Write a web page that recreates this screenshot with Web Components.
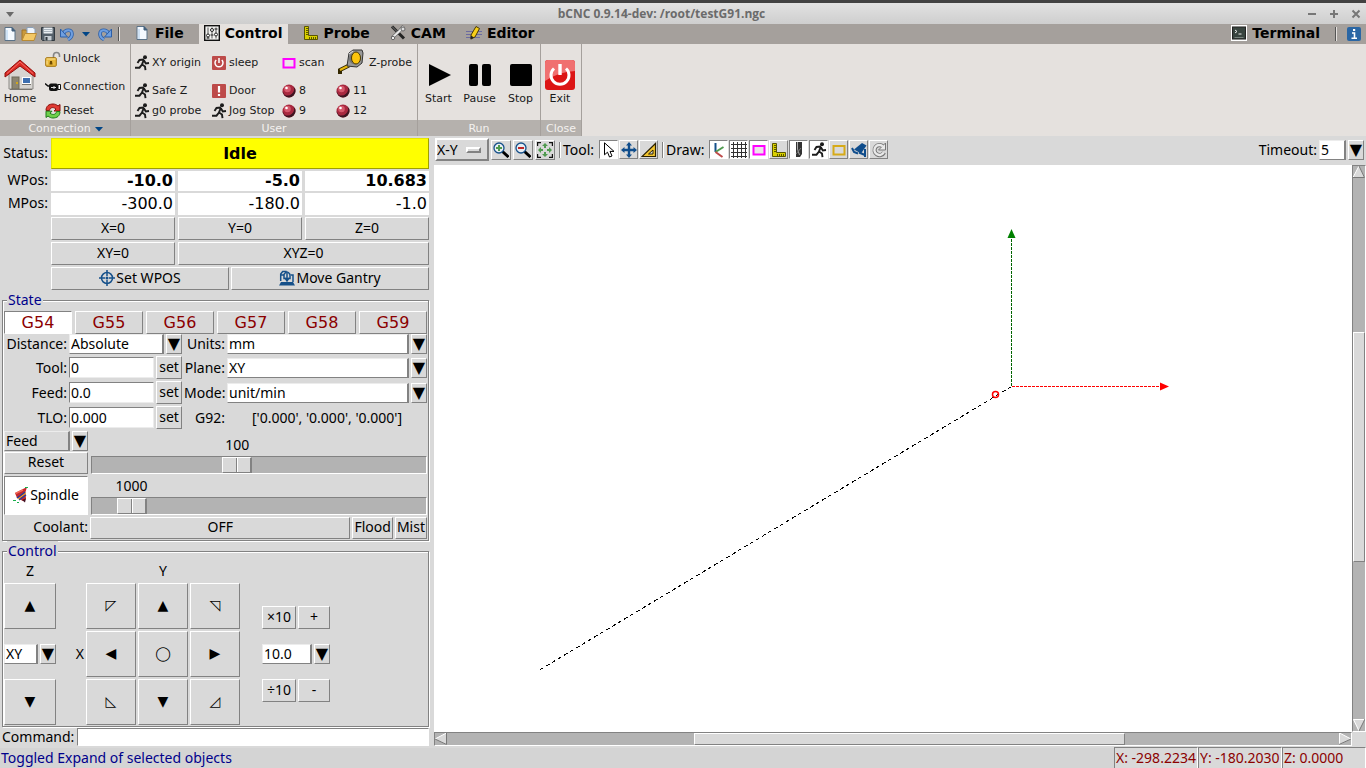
<!DOCTYPE html>
<html lang="en">
<head>
<meta charset="utf-8">
<title>bCNC 0.9.14-dev: /root/testG91.ngc</title>
<style>
html, body { height: 100%; }
body { margin: 0; font: 14px/20px "Noto Sans", "DejaVu Sans", sans-serif; color: #000; background: #d9d9d9; }
</style>
</head>
<body>
<cnc-app></cnc-app>
<script>
const ICONS = {
  doc: '<path d="M3 1.5h7l3 3v10H3z" fill="#f4f9ff" stroke="#5a7288"/><path d="M10 1.5l3 3.500h-3z" fill="#44617c" stroke="#44617c"/><path d="M5 14V4" stroke="#cfe2f5" stroke-width="2"/>',
  open: '<path d="M1 14V4h4l1 1.500h6V7" fill="#c99a3c" stroke="#a07428"/><path d="M6 1.500h6l2 2V10H6z" fill="#eef4fb" stroke="#8aa0b8"/><path d="M1 14.500L4 7.500h11.500L13 14.500z" fill="#f3c865" stroke="#b98a34"/>',
  save: '<path d="M1.500 1.500h13v13h-12l-1-1z" fill="#55606a" stroke="#30383f"/><rect x="3.500" y="1.500" width="9" height="6" fill="#e9eef2"/><path d="M4 3.500h8M4 5.500h8" stroke="#a9b4bd"/><rect x="4.500" y="10" width="7" height="4.500" fill="#c6cdd3"/><rect x="5.500" y="11" width="2" height="3.500" fill="#30383f"/>',
  undo: '<path d="M4.500 7.500C6 3.500 13 2.500 13 8c0 3-2 4.500-4 5.500" fill="none" stroke="#2c5fa8" stroke-width="3.600"/><path d="M4.500 7.500C6 3.500 13 2.500 13 8c0 3-2 4.500-4 5.500" fill="none" stroke="#6f9fe0" stroke-width="2"/><path d="M1.500 3v8h7z" fill="#6f9fe0" stroke="#2c5fa8"/>',
  redo: '<path d="M11.500 7.500C10 3.500 3 2.500 3 8c0 3 2 4.500 4 5.500" fill="none" stroke="#2c5fa8" stroke-width="3.600"/><path d="M11.500 7.500C10 3.500 3 2.500 3 8c0 3 2 4.500 4 5.500" fill="none" stroke="#6f9fe0" stroke-width="2"/><path d="M14.500 3v8h-7z" fill="#6f9fe0" stroke="#2c5fa8"/>',
  down: '<path d="M4 6h8l-4 4.500z" fill="#004586"/>',
  sliders: '<rect x=".7" y=".7" width="14.600" height="14.600" fill="#f2f2f0" stroke="#111" stroke-width="1.400"/><path d="M4 2.500v11M8 2.500v11M12 2.500v11" stroke="#555"/><circle cx="4" cy="10.500" r="1.500" fill="#fff" stroke="#222"/><circle cx="8" cy="5" r="1.500" fill="#fff" stroke="#222"/><circle cx="12" cy="9.500" r="1.500" fill="#fff" stroke="#222"/><path d="M2.500 13h3M6.500 10h3M10.500 4h3" stroke="#222"/>',
  square: '<path d="M1.500 1.500h4v9h9v4h-13z" fill="#d9d000" stroke="#5a5600"/><path d="M3 3.500h2M3 5.500h2M3 7.500h2M3 9.500h2M6.500 12v2M8.500 12v2M10.500 12v2M12.500 12v2" stroke="#5a5600"/>',
  tools: '<path d="M2 1.500l12 12" stroke="#222" stroke-width="3"/><path d="M2 1.500l7 7" stroke="#555" stroke-width="1.500"/><path d="M13.500 1l-4 5-7.500 7" fill="none" stroke="#666" stroke-width="3.200"/><path d="M13.500 1.500l-4 4.500-7 6.500" fill="none" stroke="#e8e8e8" stroke-width="2"/><circle cx="13" cy="4" r="2" fill="#ddd" stroke="#666"/><circle cx="3" cy="13" r="1.700" fill="#eee" stroke="#666"/>',
  edit: '<path d="M0 6.500h16M0 9.500h16M0 12.500h14" stroke="#6b6ba0"/><path d="M5 10l5-8.500 3.500 2L9 12l-4 2z" fill="#f8cf18" stroke="#4a3a00"/><path d="M5 10.500l-.5 4 3.500-2z" fill="#222"/>',
  terminal: '<rect x=".5" y=".5" width="15" height="15" fill="#eee" stroke="#fff"/><rect x="1.500" y="2" width="13" height="12" fill="#38443f" stroke="#222"/><path d="M4 5l2 1.500L4 8M7.500 9h3" fill="none" stroke="#eee"/><path d="M3.500 12.500h9" stroke="#77827d"/>',
  info: '<rect x="1" y="1" width="14" height="14" rx="2" fill="#2a66a4"/><path d="M6 7h2.500v5M5.500 12.200h5.500" fill="none" stroke="#fff" stroke-width="1.600"/><path d="M7 3h2.200v2H7z" fill="#fff"/>',
  home: '<path d="M5 14v16h24V14L17 4z" fill="#d7d5d1" stroke="#8b8985"/><rect x="8" y="18" width="7" height="12" fill="#8c8672" stroke="#6e6a5a"/><circle cx="13" cy="24" r="1" fill="#e9b200"/><rect x="18.500" y="18.500" width="8" height="6" fill="#3d6fb0" stroke="#fff"/><path d="M18 25.500h9M6 30.500h22" stroke="#77746f"/><path d="M1 18v-4L16 1l15 13v4L16 7z" fill="#dd2a24" stroke="#8f0f0c"/><path d="M3 14.500L16 3l13 11.500" fill="none" stroke="#f3726b"/>',
  lock: '<path d="M8.500 8V4.500c0-4 6-4 6 0V6" fill="none" stroke="#868686" stroke-width="1.600"/><rect x=".7" y="6.700" width="10.600" height="8.600" rx="1" fill="#e9b83b" stroke="#a2720d"/><path d="M1.500 8h9M2 9.500v4" stroke="#fbe39a"/><path d="M5 10h2l.5 3.500h-3z" fill="#6e4a00"/>',
  plug: '<path d="M0 4.500l3 2.500h2" fill="none" stroke="#111" stroke-width="1.500"/><rect x="4" y="4.500" width="9" height="7.500" rx="2" fill="#111"/><path d="M13 5.500h2.500v5H13z" fill="#fff" stroke="#111"/><path d="M6 8.500h5M9 7v3" stroke="#ddd"/>',
  reset: '<path d="M1 7.500C1 3 4 1 8 1c2 0 3.500.7 5 2l2-1.500V8H9l2-2C8 3.500 5 4.500 4.500 7.500z" fill="#e03a32" stroke="#8a0f0c"/><path d="M15 8.500C15 13 12 15 8 15c-2 0-3.500-.7-5-2l-2 1.500V8.200h6l-2 2C8 12.500 11 11.500 11.500 8.500z" fill="#6fd04a" stroke="#1f7a1a"/>',
  run: '<circle cx="11" cy="2.200" r="2" fill="#1c1c1c"/><path d="M10 4.500L5.500 5 3.500 8M10 4.500L8 9.500l3 2 .5 3.700M8 9.500l-2.500 3.200H1M10 5.500l1.800 3L15 8" fill="none" stroke="#1c1c1c" stroke-width="1.900"/>',
  sleep: '<rect x="1" y="1" width="14" height="14" rx="1" fill="#bd4a49"/><path d="M5.200 5a4 4 0 1 0 5.600 0M8 3v5" fill="none" stroke="#fff" stroke-width="1.500"/>',
  door: '<rect x="1" y="1" width="14" height="14" rx="1" fill="#bd4a49"/><path d="M8 3v6.500M8 11v2" stroke="#fff" stroke-width="2.200"/>',
  scan: '<rect x="2.500" y="4" width="11" height="8.500" fill="#ebe4e8" stroke="#f0f" stroke-width="2"/>',
  ball: '<circle cx="8" cy="8" r="6.500" fill="#a8283f"/><path d="M1.500 8a6.500 6.500 0 0 0 13 0 6.500 6.500 0 0 0-2-4.600 6.500 6.500 0 0 1-9 8.300z" fill="#3d1520"/><circle cx="6.500" cy="6" r="3.300" fill="#d5586b"/><circle cx="5.500" cy="5" r="1.300" fill="#fff"/>',
  tape: '<path d="M14 18.500L4 23.500M5 22v5" fill="none" stroke="#332700" stroke-width="4"/><path d="M14 18.500L5 23" stroke="#e8b80c" stroke-width="2"/><path d="M14 6l4-3h9l1 3-1 10-5 4-10-1z" fill="#999" stroke="#333"/><circle cx="20" cy="11.500" r="6" fill="#777"/><ellipse cx="21" cy="11" rx="4.500" ry="6" fill="#fcc50d" stroke="#4a3900"/><path d="M14 7l4-3" stroke="#ddd"/>',
  start: '<path d="M6 5l22 11L6 27z" fill="#000"/>',
  pause: '<rect x="5" y="5" width="9" height="22" rx="2"/><rect x="18" y="5" width="9" height="22" rx="2"/>',
  stop: '<rect x="5" y="5" width="22" height="22" rx="2"/>',
  exit: '<rect x="1" y="1" width="30" height="30" rx="3" fill="#dc1515"/><path d="M1 4q0-3 3-3h24q3 0 3 3v8Q14 13 1 22z" fill="#f07070"/><path d="M10 9.500a9 9 0 1 0 12 0" fill="none" stroke="#fff" stroke-width="3"/><path d="M16 5v11" stroke="#fff" stroke-width="3.400"/>',
  target: '<circle cx="8" cy="8" r="5.500" fill="none" stroke="#15508a" stroke-width="1.500"/><path d="M8 0v6M8 10v6M0 8h6M10 8h6" stroke="#15508a" stroke-width="1.500"/><circle cx="8" cy="8" r="1.500" fill="#15508a"/>',
  gantry: '<path d="M1.700 11V4l2-2.500h4M1 5h4M12 5h2v7" fill="none" stroke="#15508a" stroke-width="1.500"/><path d="M5 4.500q3-5 6 0v4H5z" fill="none" stroke="#15508a" stroke-width="1.500"/><path d="M8 3v7M6 8l2 3 2-3" stroke="#15508a" stroke-width="1.500" fill="none"/><path d="M0 15.500l2-3.500h12l2 3.500z" fill="#15508a"/>',
  spindle: '<path d="M2 6l8-4 4-2-1.500 5L13 12l-3 2-6-3z" fill="#c5282a"/><path d="M4 11l8-6M6 13l7-5" stroke="#2a3f9a" stroke-width="1.500"/><path d="M5 12l8-6" stroke="#e9c52a"/><path d="M2.500 6.500L10 3" stroke="#f06a5a" stroke-width="1.500"/><path d="M9 13l3 2.500 1-4z" fill="#412"/><path d="M12 .5h3M0 13.500h3M4 15.500h2" stroke="#19b04c"/>',
  zoomin: '<path d="M9.500 9.500l6 5.500" stroke="#000" stroke-width="3"/><circle cx="6" cy="6" r="5" fill="#e8eef4" stroke="#15508a" stroke-width="1.300"/><path d="M6 3v6M3 6h6" stroke="#4f9b4f" stroke-width="2"/>',
  zoomout: '<path d="M9.500 9.500l6 5.500" stroke="#000" stroke-width="3"/><circle cx="6" cy="6" r="5" fill="#e8eef4" stroke="#15508a" stroke-width="1.300"/><path d="M3 6h6" stroke="#c02626" stroke-width="2"/>',
  zoomfit: '<path d="M.5 4V.5H4M12 .5h3.500V4M15.500 12v3.500H12M4 15.500H.5V12" fill="none" stroke="#111" stroke-width="1.400"/><path d="M8 1l3 3H9v2H7V4H5zM8 15l3-3H9v-2H7v2H5zM1 8l3-3v2h2v2H4v2zM15 8l-3-3v2h-2v2h2v2z" fill="#4f9b4f"/>',
  cursor: '<path d="M3.500 .8v12l3-2.600 2 4.800 2.500-1-2-4.600h4z" fill="#fff" stroke="#000"/>',
  move: '<path d="M8 0l3 3.500H9.200v3.300h3.300V5L16 8l-3.500 3V9.200H9.200v3.300H11L8 16l-3-3.500h1.800V9.200H3.500V11L0 8l3.500-3v1.800h3.300V3.500H5z" fill="#0f4d8c"/>',
  ruler: '<path d="M14.500 1.500v13H1z" fill="#f3c52e" stroke="#2b2000" stroke-width="1.200"/><path d="M12 8v4H7.500z" fill="#d9d9d9" stroke="#2b2000"/>',
  axes: '<path d="M4.500 1v9" stroke="#15508a" stroke-width="2"/><path d="M4.500 10l8-5" stroke="#4f9b4f" stroke-width="2"/><path d="M4.500 10l7 5" stroke="#bd4a49" stroke-width="2"/>',
  grid: '<path d="M2.500 0v16M6.500 0v16M10.500 0v16M14.500 0v16M0 2.500h16M0 6.500h16M0 10.500h16M0 14.500h16" stroke="#333"/>',
  mill: '<path d="M5 0h6v12l-2 3H5z" fill="#333"/><path d="M6.500 0v7l2 6" stroke="#aaa" fill="none"/><path d="M5 12l5-6" stroke="#777"/>',
  rect: '<rect x="2.500" y="4" width="11" height="8.500" fill="none" stroke="#d6aa18" stroke-width="2"/>',
  camera: '<path d="M3 7.500l8-6.500 4.500 2.500L10 11.500z" fill="#0f4d8c"/><path d="M1 6l2 4 4 1.500M14 7v8M14 13l-6-2.500" fill="none" stroke="#0f4d8c" stroke-width="2"/>',
  refresh: '<path d="M12 4.500A5 5 0 1 0 13 10.500" fill="none" stroke="#777" stroke-width="4.200"/><path d="M14.500 1v7H7.500z" fill="#e9e9e9" stroke="#777"/><path d="M12 4.500A5 5 0 1 0 12.800 10.300" fill="none" stroke="#e9e9e9" stroke-width="2.400"/>'
};
const BIG = new Set(['home', 'tape', 'start', 'pause', 'stop', 'exit']);

function define(name, css, render) {
  customElements.define(name, class extends HTMLElement {
    constructor() { super(); this.attachShadow({ mode: 'open' }); }
    connectedCallback() {
      const t = document.createElement('template');
      const a = n => this.getAttribute(n) || '';
      t.innerHTML = `<style>*{box-sizing:border-box}${css}</style>${render(a, this)}`;
      this.shadowRoot.replaceChildren(t.content.cloneNode(true));
    }
  });
}

define('cnc-icon', ':host{display:block;flex:none}svg{display:block}', a => {
  const s = BIG.has(a('name')) ? 32 : 16;
  return `<svg width="${s}" height="${s}" viewBox="0 0 ${s} ${s}" aria-hidden="true">${ICONS[a('name')] || ''}</svg>`;
});

define('tk-button', `
  :host{display:block}
  button{display:flex;align-items:center;justify-content:center;width:100%;height:100%;min-height:var(--h,23px);margin:0;padding:0 var(--px,2px) var(--pb,2px);
    border:1px solid;border-color:#fff #828282 #828282 #fff;background:#d9d9d9;font:inherit;color:inherit;line-height:18px;white-space:nowrap;gap:1px}
  button.on{background:#fff;border-color:#828282 #fff #fff #828282}`,
  a => `<button type="button" ${a('on') ? 'class="on" aria-pressed="true"' : ''} ${a('tip') ? `aria-label="${a('tip')}"` : ''}>${a('icon') ? `<cnc-icon name="${a('icon')}"></cnc-icon>` : ''}<slot></slot></button>`);

define('tk-combo', `
  :host{display:flex;gap:2px;height:20px;min-width:0}
  select{appearance:none;flex:1;min-width:0;height:20px;margin:0;padding:0 1px;border:1px solid;border-color:#ececec #828282 #828282 #ececec;border-width:1px 2px 1px 1px;
    border-radius:0;background:var(--field,#fff);font:inherit;color:#000;line-height:18px}
  button{flex:none;width:16px;height:20px;margin:0;padding:0;border:1px solid;border-color:#fff #828282 #828282 #fff;background:#d9d9d9;
    font:16px/16px "DejaVu Sans",sans-serif;color:#000;display:flex;justify-content:center;align-items:center}`,
  a => `<select id="s" aria-label="${a('label')}">${a('options').split('|').map(o => `<option>${o}</option>`).join('')}</select><button type="button" tabindex="-1" aria-label="Open ${a('label')}">▼</button>`);

define('tk-field', `
  :host{display:contents}
  label{align-self:center;text-align:right;white-space:nowrap}
  .ctl{display:flex;gap:2px;align-items:center;min-width:0}
  input{flex:1;min-width:0;width:0;height:21px;margin:0;padding:0 1px;border:1px solid;border-color:#828282 #ececec #ececec #828282;background:#fff;font:inherit;color:#000}
  tk-button{width:26px}
  select{appearance:none;flex:1;min-width:0;height:20px;margin:0;padding:0 1px;border:1px solid;border-color:#ececec #828282 #828282 #ececec;border-width:1px 2px 1px 1px;border-radius:0;background:#fff;font:inherit;color:#000;line-height:18px}
  .arrow{flex:none;width:16px;height:20px;margin:0;padding:0;border:1px solid;border-color:#fff #828282 #828282 #fff;background:#d9d9d9;font:16px/16px "DejaVu Sans",sans-serif;color:#000;display:flex;justify-content:center;align-items:center}
  output{flex:1;text-align:center}`,
  a => {
    const v = a('value');
    const c = a('kind') === 'combo' ? `<select id="f"><option>${v}</option></select><button class="arrow" type="button" tabindex="-1" aria-label="Open list">▼</button>`
      : a('kind') === 'output' ? `<output id="f">${v}</output>`
      : `<input id="f" type="text" value="${v}">${a('set') ? '<tk-button>set</tk-button>' : ''}`;
    return `<label for="f">${a('label')}</label><div class="ctl">${c}</div>`;
  });

define('tk-scale', `
  :host{display:flex;flex-direction:column;justify-content:flex-end;min-width:0}
  .val{display:flex;padding:0 15px;height:20px}
  .lo{flex:var(--p) 0 0px}.hi{flex:calc(1 - var(--p)) 0 0px}
  output{width:0;display:flex;justify-content:center}
  input{appearance:none;display:block;width:100%;height:18px;margin:1px 0 0;border:1px solid;border-color:#828282 #fff #fff #828282;background:#b3b3b3;border-radius:0}
  input::-webkit-slider-thumb{appearance:none;width:30px;height:16px;border:2px solid;border-color:#fff #828282 #828282 #fff;border-width:1px 2px 1px 1px;
    background:linear-gradient(90deg,#d9d9d9 13px,#828282 13px,#828282 14px,#fff 14px,#fff 15px,#d9d9d9 15px)}`,
  (a, el) => {
    el.style.setProperty('--p', a('value') / a('max'));
    return `<div class="val"><span class="lo"></span><output for="r">${a('value')}</output><span class="hi"></span></div><input id="r" type="range" min="0" max="${a('max')}" value="${a('value')}" aria-label="${a('label')}">`;
  });

define('tk-frame', `
  :host{display:block}
  fieldset{margin:0;padding:0 1px 1px;border:1px solid #828282;box-shadow:inset 1px 1px #fff,1px 1px #fff;min-width:0}
  legend{margin-left:3px;padding:0 1px;color:#00008b;background:#d9d9d9;line-height:20px}`,
  a => `<fieldset><legend>${a('label')}</legend><slot></slot></fieldset>`);

define('title-bar', `
  :host{display:grid;grid-template-columns:auto 1fr auto;align-items:center;height:24px;border-top:3px solid #424242;background:linear-gradient(#e2e2e2,#cecece);color:#6b6b6b}
  h1{margin:0;font:bold 12px/20px "Open Sans","Noto Sans",sans-serif;text-align:center}
  svg{display:block}.l{padding-left:3px}.r{display:flex;gap:6px;padding-right:2px}
  button{display:block;border:0;background:none;margin:0;padding:0;width:16px;height:16px}`,
  () => `<div class="l"><button aria-label="Window menu"><svg width="14" height="16"><path d="M3 6h8l-4 5z" fill="#6a6a6a"/></svg></button></div>
  <h1>bCNC 0.9.14-dev: /root/testG91.ngc</h1>
  <div class="r"><button aria-label="Minimize"><svg width="16" height="16"><path d="M4 8h8" stroke="#777" stroke-width="2"/></svg></button>
  <button aria-label="Maximize"><svg width="16" height="16"><path d="M4 8h8M8 4v8" stroke="#777" stroke-width="2"/></svg></button>
  <button aria-label="Close"><svg width="16" height="16"><path d="M4.500 4.500l7 7M11.500 4.500l-7 7" stroke="#777" stroke-width="2"/></svg></button></div>`);

define('ribbon-tab', `
  :host{display:block}
  button{display:flex;align-items:center;gap:5px;height:20px;margin:0;padding:0 5px 2px;border:0;background:none;color:#000;font:bold 14px/18px "DejaVu Sans",sans-serif}
  button.on{background:#e5e1de}`,
  a => `<button type="button" ${a('on') ? 'class="on" aria-current="page"' : ''}><cnc-icon name="${a('icon')}"></cnc-icon><slot></slot></button>`);

define('ribbon-tabs', `
  :host{display:flex;align-items:center;height:20px;background:#a5a09c}
  .quick{display:flex;gap:3px;padding:0 5px 0 2px}
  .quick button,.info{display:block;border:0;background:none;padding:0;margin:0;width:16px;height:16px}
  .sep{width:2px;height:14px;background:linear-gradient(90deg,#555 50%,#e5e1de 50%)}
  nav{display:flex;gap:10px;flex:1;padding-left:9px}
  .info{margin:0 4px 0 9px}.right{padding-right:10px}`,
  () => `<div class="quick">${[['doc','New'],['open','Open'],['save','Save'],['undo','Undo'],['down','Undo list'],['redo','Redo']].map(i => `<button aria-label="${i[1]}"><cnc-icon name="${i[0]}"></cnc-icon></button>`).join('')}</div>
  <span class="sep"></span>
  <nav><ribbon-tab icon="doc">File</ribbon-tab><ribbon-tab icon="sliders" on="1">Control</ribbon-tab><ribbon-tab icon="square">Probe</ribbon-tab><ribbon-tab icon="tools">CAM</ribbon-tab><ribbon-tab icon="edit">Editor</ribbon-tab></nav>
  <ribbon-tab class="right" icon="terminal">Terminal</ribbon-tab><span class="sep"></span><button class="info" aria-label="About"><cnc-icon name="info"></cnc-icon></button>`);

define('ribbon-button', `
  :host{display:flex;align-items:center}
  button{display:flex;align-items:center;gap:2px;margin:0;padding:0;border:0;background:none;font:11px/16px "DejaVu Sans",sans-serif;color:#1a1a1a;white-space:nowrap}
  :host([large]) button{flex-direction:column;gap:0;width:100%}`,
  a => `<button type="button"><cnc-icon name="${a('icon')}"></cnc-icon><span><slot></slot></span></button>`);

define('ribbon-group', `
  :host{display:flex;flex-direction:column;border-right:1px solid #a5a09c}
  .body{height:76px;display:flex}
  .cap{height:16px;padding-top:1px;background:#b5b1ad;color:#f4f2f0;font:11px/16px "DejaVu Sans",sans-serif;display:flex;justify-content:center;align-items:center}
  .menu{padding-left:5px}`,
  a => `<div class="body"><slot></slot></div><div class="cap${a('menu') ? ' menu' : ''}">${a('label')}${a('menu') ? '<cnc-icon name="down"></cnc-icon>' : ''}</div>`);

define('ribbon-bar', `
  :host{display:flex;background:#e5e1de}
  .conn{display:grid;grid-template:28px 28px 20px/auto;margin-left:5px;padding-top:1px}
  .user{display:grid;grid-template:36px 20px 20px/77px 70px 54px auto;padding:1px 0 0 3px}
  .g1{width:131px}.g2{width:287px}.g3{width:123px}.g4{width:41px}
  .home{width:40px}.run{display:grid;grid-template-columns:repeat(3,41px);width:100%}
  .exit{width:38px}
  .home,.run,.exit{padding-top:2px}`,
  () => `<ribbon-group class="g1" label="Connection" menu="1"><ribbon-button class="home" large icon="home">Home</ribbon-button>
    <div class="conn"><ribbon-button icon="lock">Unlock</ribbon-button><ribbon-button icon="plug">Connection</ribbon-button><ribbon-button icon="reset">Reset</ribbon-button></div></ribbon-group>
  <ribbon-group class="g2" label="User"><div class="user">
    <ribbon-button icon="run">XY origin</ribbon-button><ribbon-button icon="sleep">sleep</ribbon-button><ribbon-button icon="scan">scan</ribbon-button><ribbon-button icon="tape">Z-probe</ribbon-button>
    <ribbon-button icon="run">Safe Z</ribbon-button><ribbon-button icon="door">Door</ribbon-button><ribbon-button icon="ball">8</ribbon-button><ribbon-button icon="ball">11</ribbon-button>
    <ribbon-button icon="run">g0 probe</ribbon-button><ribbon-button icon="run">Jog Stop</ribbon-button><ribbon-button icon="ball">9</ribbon-button><ribbon-button icon="ball">12</ribbon-button></div></ribbon-group>
  <ribbon-group class="g3" label="Run"><div class="run"><ribbon-button large icon="start">Start</ribbon-button><ribbon-button large icon="pause">Pause</ribbon-button><ribbon-button large icon="stop">Stop</ribbon-button></div></ribbon-group>
  <ribbon-group class="g4" label="Close"><ribbon-button class="exit" large icon="exit">Exit</ribbon-button></ribbon-group>`);

define('dro-panel', `
  :host{display:grid;grid-template-columns:48px repeat(3,1fr);column-gap:3px;row-gap:2px;padding:2px 1px 0 0}
  .lab{align-self:center;text-align:right;line-height:18px;padding-bottom:2px}
  .status{grid-column:2/5;height:31px;margin:0;border:1px solid;border-color:#e6e600 #a0a000 #a0a000 #e6e600;background:#ff0;font:bold 16px/20px "DejaVu Sans",sans-serif;color:#000}
  input,output{width:100%;min-width:0;height:20px;margin:0;padding:0 2px 0 0;border:0;background:#fff;text-align:right;font:bold 16px/20px "DejaVu Sans",sans-serif;color:#000}
  output{font-weight:normal;height:22px;line-height:22px}
  .w2{grid-column:span 2}.all{grid-column:2/5;display:flex;gap:2px}.all tk-button{flex:1 0 auto}
  .c2{grid-column-start:2}`,
  () => `<span class="lab">Status:</span><button class="status">Idle</button>
  <label class="lab" for="wx">WPos:</label><input id="wx" value="-10.0"><input aria-label="WPos Y" value="-5.0"><input aria-label="WPos Z" value="10.683">
  <span class="lab">MPos:</span><output>-300.0</output><output>-180.0</output><output>-1.0</output>
  <tk-button class="c2">X=0</tk-button><tk-button>Y=0</tk-button><tk-button>Z=0</tk-button>
  <tk-button class="c2">XY=0</tk-button><tk-button class="w2">XYZ=0</tk-button>
  <div class="all"><tk-button icon="target">Set WPOS</tk-button><tk-button icon="gantry">Move Gantry</tk-button></div>`);

define('state-panel', `
  :host{display:block}
  .g{--pb:0;display:grid;grid-template-columns:repeat(6,1fr);gap:3px;margin-top:1px;color:#8b0000;font:16px/20px "DejaVu Sans",sans-serif}
  .f{display:grid;grid-template-columns:63px 113px 41px 1fr;gap:2px}
  .o{display:grid;grid-template-columns:84px 1fr;gap:2px 3px;margin-top:2px}
  .l{display:grid;gap:1px}.l tk-combo{--field:#d9d9d9}.l tk-button{--h:21px}
  .sp{--h:39px}
  .c{display:grid;grid-template-columns:84px 1fr auto auto;gap:2px;margin:2px 0 0}
  .c span{text-align:right}.c tk-button{--h:19px;--px:1px}`,
  () => `<tk-frame label="State">
  <div class="g"><tk-button on="1">G54</tk-button>${[55,56,57,58,59].map(n => `<tk-button>G${n}</tk-button>`).join('')}</div>
  <div class="f">
    <tk-field kind="combo" label="Distance:" value="Absolute"></tk-field><tk-field kind="combo" label="Units:" value="mm"></tk-field>
    <tk-field label="Tool:" value="0" set="1"></tk-field><tk-field kind="combo" label="Plane:" value="XY"></tk-field>
    <tk-field label="Feed:" value="0.0" set="1"></tk-field><tk-field kind="combo" label="Mode:" value="unit/min"></tk-field>
    <tk-field label="TLO:" value="0.000" set="1"></tk-field><tk-field kind="output" label="G92:" value="['0.000', '0.000', '0.000']"></tk-field>
  </div>
  <div class="o"><div class="l"><tk-combo label="Override" options="Feed"></tk-combo><tk-button>Reset</tk-button></div><tk-scale label="Feed override" value="100" max="233"></tk-scale>
    <tk-button class="sp" icon="spindle" on="1">Spindle</tk-button><tk-scale label="Spindle speed" value="1000" max="12000"></tk-scale></div>
  <div class="c"><span>Coolant:</span><tk-button>OFF</tk-button><tk-button>Flood</tk-button><tk-button>Mist</tk-button></div></tk-frame>`);

define('jog-panel', `
  :host{display:block}
  .j{display:grid;grid-template:20px repeat(3,46px)/52px 26px repeat(3,50px) 18px 34px 32px;gap:2px}
  .j>*{min-width:0}.t{text-align:center;line-height:20px}.x{align-self:center;text-align:right}
  .a{font:14px/18px "DejaVu Sans",sans-serif}
  .m{align-self:center}.e{align-self:end}.s{align-self:start}.w{grid-column:span 2}`,
  () => `<tk-frame label="Control"><div class="j">
  <span class="t">Z</span><i></i><i></i><span class="t">Y</span><i></i><i></i><i></i><i></i>
  <tk-button class="a">▲</tk-button><i></i><tk-button class="a">◸</tk-button><tk-button class="a">▲</tk-button><tk-button class="a">◹</tk-button><i></i><tk-button class="e">×10</tk-button><tk-button class="e">+</tk-button>
  <tk-combo class="m" label="Plane" options="XY"></tk-combo><span class="x">X</span><tk-button class="a">◀</tk-button><tk-button class="a">◯</tk-button><tk-button class="a">▶</tk-button><i></i><tk-combo class="m w" label="Step" options="10.0"></tk-combo>
  <tk-button class="a">▼</tk-button><i></i><tk-button class="a">◺</tk-button><tk-button class="a">▼</tk-button><tk-button class="a">◿</tk-button><i></i><tk-button class="s">÷10</tk-button><tk-button class="s">-</tk-button>
  </div></tk-frame>`);

define('command-line', `
  :host{display:flex;align-items:center;gap:3px;padding:0 1px 0 2px}
  input{flex:1;min-width:0;height:18px;margin:0;padding:0 2px;border:1px solid;border-color:#828282 #fff #fff #828282;background:#fff;font:inherit}`,
  () => `<label for="c">Command:</label><input id="c" type="text">`);

define('view-tools', `
  :host{display:flex;align-items:center;height:29px;padding:0 2px 2px 1px}
  .v{position:relative;width:54px;height:23px;border:2px solid;border-color:#fff #828282 #828282 #fff;display:flex;align-items:center;margin-right:2px}
  .v select{appearance:none;width:100%;height:19px;margin:0;padding:0;border:0;background:none;font:inherit;color:#000}
  .v i{position:absolute;right:6px;width:15px;height:6px;border:2px solid;border-color:#fff #828282 #828282 #fff;pointer-events:none}
  tk-button{--pb:0;--px:0}
  .z,.b{display:flex;gap:2px}.z tk-button{--h:20px;width:20px}.b{gap:1px}.b tk-button{width:19px;--h:19px}
  .s{width:2px;height:16px;background:linear-gradient(90deg,#828282 50%,#fff 50%);margin:0 2px 0 4px}
  .t{margin-right:5px}.x{flex:1}.to{display:grid;grid-template-columns:auto 45px;gap:2px}`,
  () => `<div class="v"><select aria-label="View"><option>X-Y</option></select><i></i></div>
  <div class="z"><tk-button tip="Zoom in" icon="zoomin"></tk-button><tk-button tip="Zoom out" icon="zoomout"></tk-button><tk-button tip="Fit" icon="zoomfit"></tk-button></div>
  <span class="s"></span><span class="t">Tool:</span>
  <div class="b"><tk-button tip="Select" icon="cursor" on="1"></tk-button><tk-button tip="Pan" icon="move"></tk-button><tk-button tip="Ruler" icon="ruler"></tk-button></div>
  <span class="s"></span><span class="t">Draw:</span>
  <div class="b">${[['axes',1],['grid',1],['scan',1],['square',0],['mill',1],['run',1],['rect',0],['camera',0],['refresh',0]].map(i => `<tk-button tip="${i[0]}" icon="${i[0]}" ${i[1] ? 'on="1"' : ''}></tk-button>`).join('')}</div>
  <span class="x"></span><div class="to"><tk-field kind="combo" label="Timeout:" value="5"></tk-field></div>`);

define('tool-path', `
  :host{display:block;background:#fff;min-width:0;min-height:0;overflow:hidden}
  svg{display:block;width:100%;height:100%}`,
  () => `<svg viewBox="0 0 918 566" preserveAspectRatio="xMinYMin meet" role="img" aria-label="Tool path">
  <path d="M577.500 221.500L106.500 504.500" stroke="#000" stroke-dasharray="4 3" shape-rendering="crispEdges"/>
  <path d="M577.500 221V72" stroke="#006400" stroke-dasharray="3 1" shape-rendering="crispEdges"/>
  <path d="M577.500 64l4 9h-8z" fill="#008000"/>
  <path d="M578 221.500h150" stroke="#f00" stroke-dasharray="3 1" shape-rendering="crispEdges"/>
  <path d="M735 221.500l-9-4v8z" fill="#f00"/>
  <circle cx="561.500" cy="229.500" r="3" fill="none" stroke="#f00" stroke-width="1.500"/></svg>`);

define('scroll-bar', `
  :host{display:flex;background:#b3b3b3;border:1px solid;border-color:#828282 #fff #fff #828282;min-width:0;min-height:0}
  :host([vertical]){flex-direction:column}
  svg{display:block;flex:none}
  .a{flex:var(--a) 0 0px}.t{flex:var(--t) 0 0px;background:#d9d9d9;border:1px solid;border-color:#fff #828282 #828282 #fff}.b{flex:var(--b) 0 0px}`,
  (a, el) => {
    const v = el.hasAttribute('vertical');
    const [p, t, b] = a('parts').split(' ');
    el.style.setProperty('--a', p); el.style.setProperty('--t', t); el.style.setProperty('--b', b);
    const tri = (d1, d2) => `<svg width="12" height="12"><path d="${d1}" fill="#d9d9d9"/><path d="${d2[0]}" stroke="#fff" fill="none"/><path d="${d2[1]}" stroke="#777" fill="none"/></svg>`;
    const first = v ? tri('M6 0l6 12H0z', ['M0 11.500L6 0', 'M6 0l5.500 11.500H0']) : tri('M0 6L12 0v12z', ['M11.500 0L0 6', 'M0 6l11.500 5.500V0']);
    const last = v ? tri('M6 12L0 0h12z', ['M6 12L.500.500H12', 'M12 0L6 12']) : tri('M12 6L0 0v12z', ['M12 6L.500 0v12', 'M0 11.500L12 6']);
    return `${first}<span class="a"></span><span class="t"></span><span class="b"></span>${last}`;
  });

define('status-bar', `
  :host{display:grid;grid-template-columns:1fr repeat(3,84px);height:22px}
  span{overflow:hidden;white-space:nowrap}
  .m{color:#00008b;padding-left:1px;background:#d4d4d4;margin-top:1px}
  .c{color:#8b0000;border:1px solid;border-color:#828282 #fff #fff #828282;padding-left:1px;line-height:19px}`,
  () => `<span class="m">Toggled Expand of selected objects</span><span class="c">X: -298.2234</span><span class="c">Y: -180.2030</span><span class="c">Z: 0.0000</span>`);

define('cnc-app', `
  :host{display:flex;flex-direction:column;min-height:100vh}
  main{flex:1;display:grid;grid-template-columns:430px 1fr;column-gap:4px;min-height:0}
  .left{display:flex;flex-direction:column}
  .right{display:grid;grid-template:auto 1fr 14px/1fr 14px;min-width:0;padding-bottom:1px}
  view-tools{grid-column:1/3}
  state-panel,jog-panel{padding:0 1px 0 2px}`,
  () => `<title-bar></title-bar><ribbon-tabs></ribbon-tabs><ribbon-bar></ribbon-bar>
  <main><section class="left"><dro-panel></dro-panel><state-panel></state-panel><jog-panel></jog-panel><command-line></command-line></section>
  <section class="right"><view-tools></view-tools><tool-path></tool-path><scroll-bar vertical parts="154 229 157"></scroll-bar><scroll-bar parts="248 430 214"></scroll-bar></section></main>
  <status-bar></status-bar>`);
</script>
</body>
</html>
